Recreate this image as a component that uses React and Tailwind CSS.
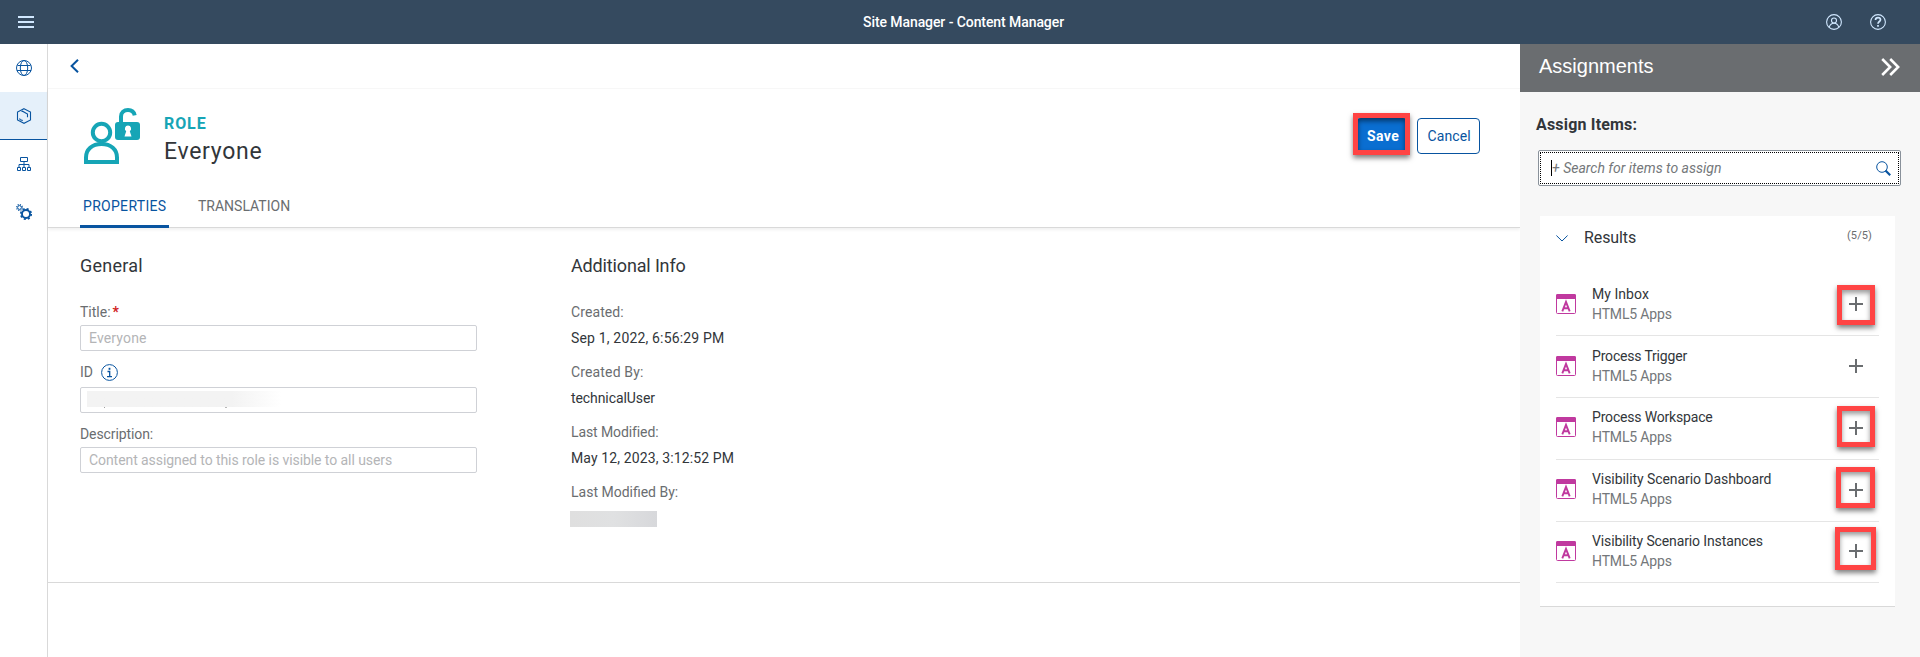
import React from "react";

const assignments = [
  { name: "My Inbox", tracking: "tracking-[0.05px]", height: "h-[62px]", iconTop: "pt-5", textTop: "pt-[10px]", plusTop: "mt-[30px]", mark: "left-[-19px] top-[-19px] h-[40px] w-[38px]" },
  { name: "Process Trigger", tracking: "tracking-[-0.18px]", height: "h-[62px]", iconTop: "pt-5", textTop: "pt-[10px]", plusTop: "mt-[30px]", mark: null },
  { name: "Process Workspace", tracking: "tracking-[-0.18px]", height: "h-[62px]", iconTop: "pt-[19px]", textTop: "pt-[9px]", plusTop: "mt-[30px]", mark: "left-[-19px] top-[-22px] h-[41px] w-[38px]" },
  { name: "Visibility Scenario Dashboard", tracking: "tracking-[-0.07px]", height: "h-[62px]", iconTop: "pt-[19px]", textTop: "pt-[9px]", plusTop: "mt-[30px]", mark: "left-[-20px] top-[-23px] h-[41px] w-[39px]" },
  { name: "Visibility Scenario Instances", tracking: "tracking-[-0.12px]", height: "h-[61px]", iconTop: "pt-[19px]", textTop: "pt-[9px]", plusTop: "mt-[29px]", mark: "left-[-21px] top-[-24px] h-[43px] w-[41px]" },
];

function GlobeIcon() {
  return (
    <svg width="16" height="16" viewBox="0 0 16 16" fill="none" stroke="#0854a0" strokeWidth="1">
      <circle cx="8" cy="8" r="7.5" />
      <ellipse cx="8" cy="8" rx="3.7" ry="7.5" />
      <path d="M1.5 5.5h13M1 10.5h14" />
    </svg>
  );
}

function HexagonIcon() {
  return (
    <svg width="16" height="16" viewBox="0 0 16 16" fill="none" stroke="#0854a0" strokeWidth="1.1">
      <path d="M8 .7l6.500 3.300v8L8 15.300 1.500 12V4z" />
      <path d="M5.500 3.500l1-.3 5 2.800v3.200M3.500 10.500l.8 1.300 2.500.8" />
    </svg>
  );
}

function TreeIcon() {
  return (
    <svg width="14" height="14" viewBox="0 0 14 14" fill="none" stroke="#0854a0" strokeWidth="1">
      <path d="M3.500.5h7v4h-7zM.5 10.500h3v3h-3zM5.500 10.500h3v3h-3zM10.500 10.500h3v3h-3zM7 4.500v6M2 10.500v-3h10v3" />
    </svg>
  );
}

function GearsIcon() {
  return (
    <svg width="16" height="16" viewBox="0 0 16 16" fill="none" stroke="#0854a0">
      <circle cx="10" cy="10" r="4" strokeWidth="1.900" />
      <circle cx="10" cy="10" r="5.200" strokeWidth="1.800" strokeDasharray="2.042 2.042" />
      <circle cx="3.500" cy="3.500" r="1.900" strokeWidth="1" />
      <circle cx="3.500" cy="3.500" r="2.900" strokeWidth="1.200" strokeDasharray="1.139 1.139" />
    </svg>
  );
}

function RoleIcon() {
  return (
    <svg width="56" height="56" viewBox="0 0 56 56" fill="none" stroke="#16a5b6" strokeWidth="4">
      <circle cx="17.500" cy="24.500" r="8.700" />
      <path d="M2 54V49.500C2 41.500 8 36 17.500 36S33 41.500 33 49.500V54z" />
      <path d="M37 15V8.500C37 4.500 40 2 44 2c3.500 0 6 2 6.700 5.300" />
      <rect x="31" y="14" width="25" height="18" rx="3" fill="#16a5b6" stroke="none" />
      <path d="M44 17.500a3.200 3.200 0 0 1 1.800 5.800L47.500 28.500h-7l1.700-5.200A3.200 3.200 0 0 1 44 17.500z" fill="#fff" stroke="none" />
    </svg>
  );
}

function AppIcon() {
  return (
    <svg width="20" height="20" viewBox="0 0 20 20" fill="none" className="shrink-0">
      <rect x=".5" y=".5" width="19" height="19" rx="1" fill="#fff" stroke="#c0399f" />
      <path d="M0 5V1.500Q0 0 1.500 0h17Q20 0 20 1.500V5z" fill="#c0399f" />
      <path d="M6.300 17.400L10 7.900l3.700 9.500M7.500 14.200h5" stroke="#c0399f" strokeWidth="1.900" />
    </svg>
  );
}

function Field({ label, labelTracking, value, valueTracking }) {
  return (
    <div className="flex flex-col gap-1.5">
      <div className={"h-5 text-[#6a6d70] " + labelTracking}>{label}</div>
      <div className={"h-5 " + valueTracking}>{value}</div>
    </div>
  );
}

export default function App() {
  return (
    <div className="flex h-[657px] w-[1920px] flex-col overflow-hidden bg-white font-[Roboto,sans-serif] text-sm leading-5 whitespace-nowrap text-[#32363a]">
      <header className="flex h-11 shrink-0 items-center bg-[#354a5f]">
        <div className="w-[863px] pl-[18px]">
          <svg width="16" height="12" viewBox="0 0 16 12" fill="#d1e8ff"><path d="M0 0h16v2H0zM0 5h16v2H0zM0 10h16v2H0z" /></svg>
        </div>
        <h1 className="flex-1 font-medium tracking-[-0.08px] text-white">Site Manager - Content Manager</h1>
        <div className="flex justify-end gap-7 pr-[34px]">
          <svg width="16" height="16" viewBox="0 0 16 16" fill="none" stroke="#d1e8ff" strokeWidth="1.100">
            <circle cx="8" cy="8" r="7.400" /><circle cx="8" cy="6.500" r="2.500" /><path d="M3.200 13.200C4 10.500 5.500 9.200 8 9.200s4 1.300 4.800 4" />
          </svg>
          <svg width="16" height="16" viewBox="0 0 16 16" fill="none" stroke="#d1e8ff" strokeWidth="1.100">
            <circle cx="8" cy="8" r="7.400" /><path d="M5.500 6c0-1.500 1-2.400 2.500-2.400s2.500.9 2.500 2.200C10.500 7.500 8 7.600 8 9.800M8 11v1.800" strokeWidth="1.700" />
          </svg>
        </div>
      </header>
      <div className="flex min-h-0 flex-1">
        <nav className="flex w-12 shrink-0 flex-col border-r border-[#d9d9d9]">
          <div className="flex h-12 items-center justify-center pl-px"><GlobeIcon /></div>
          <div className="flex h-12 items-center justify-center border-b border-[#0854a0] bg-[#e5f0fa] pl-px"><HexagonIcon /></div>
          <div className="flex h-12 items-center justify-center pl-px"><TreeIcon /></div>
          <div className="flex h-12 items-center justify-center pl-px"><GearsIcon /></div>
        </nav>
        <main className="flex flex-1 flex-col">
          <div className="flex h-11 items-center pl-[22px]">
            <svg width="9" height="14" viewBox="0 0 9 14" fill="none" stroke="#0854a0" strokeWidth="2"><path d="M8 .7L1.600 7 8 13.300" /></svg>
          </div>
          <section className="flex h-[140px] flex-col justify-between border-t border-b border-t-[#f7f7f7] border-b-[#d9d9d9] shadow-[0_2px_3px_rgba(0,0,0,0.06)]">
            <div className="flex pt-[19px] pr-10 pl-9">
              <RoleIcon />
              <div className="ml-6 flex flex-1 flex-col gap-1 pt-1.5">
                <div className="h-5 text-base leading-5 font-bold tracking-[0.9px] text-[#16a5b6]">ROLE</div>
                <div className="h-7 text-[23px] leading-7 tracking-[0.7px]">Everyone</div>
              </div>
              <div className="mt-[10px] flex gap-[10px]">
                <div className="relative h-9 w-[50px] rounded bg-[#0a6ed1] pl-[10px] leading-[36px] font-bold tracking-[0.4px] text-white">
                  Save
                  <div className="absolute top-[-5px] left-[-4px] h-[42px] w-[57px] border-5 border-[#ff4444] shadow-[0_3px_5px_rgba(0,0,0,0.5),inset_0_3px_5px_rgba(0,0,0,0.5)]" />
                </div>
                <div className="h-9 w-[63px] rounded border border-[#0854a0] pl-[9.5px] leading-[34px] tracking-[0.1px] text-[#0854a0]">Cancel</div>
              </div>
            </div>
            <div className="-mb-px flex gap-[29px] pl-8">
              <div className="h-8 w-[89px] rounded-t-xs border-b-3 border-[#0854a0] pl-[3px] tracking-[0.3px] text-[#0854a0]">PROPERTIES</div>
              <div className="h-8 text-[#6a6d70]">TRANSLATION</div>
            </div>
          </section>
          <section className="flex h-[355px] border-b border-[#d9d9d9] pt-[26px] pl-8">
            <div className="w-[491px]">
              <h2 className="mb-6 text-lg leading-6 tracking-[0.25px]">General</h2>
              <div className="flex w-[397px] flex-col text-[#6a6d70]">
                <label className="mb-[3px] h-5">Title:<span className="ml-0.5 font-bold text-[#d02020]">*</span></label>
                <div className="h-[26px] rounded-xs border border-[#cfd1d6] pl-2 leading-6 tracking-[0.15px] text-[#b4b5b7]">Everyone</div>
                <label className="mt-[11px] mb-[5px] flex h-5 gap-2">ID
                  <svg width="17" height="17" viewBox="0 0 17 17" fill="none" stroke="#0854a0" strokeWidth="1" className="mt-[2px]"><circle cx="8.500" cy="8.500" r="7.900" /><path d="M8.500 3.800v2" strokeWidth="1.800" /><path d="M6.500 7.500h2.200v5M6 12.700h5" strokeWidth="1.300" /></svg>
                </label>
                <div className="h-[26px] rounded-xs border border-[#cfd1d6] pt-[3px] pl-1.5">
                  <div className="h-4 w-[194px] bg-linear-to-r from-[#f3f3f3] from-75% to-white" />
                  <div className="ml-[17px] flex gap-[120px]">
                    <div className="h-px w-px bg-[#a0a0a0]" />
                    <div className="h-px w-0.5 bg-[#b8b8b8]" />
                  </div>
                </div>
                <label className="mt-[11px] mb-[3px] h-5 tracking-[-0.1px]">Description:</label>
                <div className="h-[26px] rounded-xs border border-[#cfd1d6] pl-2 leading-6 tracking-[-0.07px] text-[#b4b5b7]">Content assigned to this role is visible to all users</div>
              </div>
            </div>
            <div>
              <h2 className="mb-6 text-lg leading-6 tracking-[-0.15px]">Additional Info</h2>
              <div className="flex flex-col gap-3.5">
                <Field label="Created:" labelTracking="tracking-[0.1px]" value="Sep 1, 2022, 6:56:29 PM" valueTracking="tracking-[0.17px]" />
                <Field label="Created By:" labelTracking="tracking-[0.15px]" value="technicalUser" valueTracking="tracking-[-0.08px]" />
                <Field label="Last Modified:" labelTracking="tracking-[-0.1px]" value="May 12, 2023, 3:12:52 PM" valueTracking="tracking-[0.12px]" />
                <div className="text-[#6a6d70]">Last Modified By:
                  <div className="mt-[9px] -ml-px h-4 w-[87px] bg-linear-to-r from-[#dfdfdf] via-[#e0e1e2] to-[#d7d8db]" />
                </div>
              </div>
            </div>
          </section>
        </main>
        <aside className="flex w-[400px] shrink-0 flex-col bg-[#f7f7f7]">
          <div className="flex h-12 items-center bg-[#6a6d70] pr-5 pl-[19px] text-white">
            <h2 className="flex-1 pb-1 font-['Liberation_Sans',sans-serif] text-xl leading-6">Assignments</h2>
            <svg width="19" height="18" viewBox="0 0 19 18" fill="none" stroke="#fff" strokeWidth="2.500" className="-mt-0.5"><path d="M1.200 1l8 8-8 8M9.200 1l8 8-8 8" /></svg>
          </div>
          <h3 className="mt-[23px] ml-4 h-5 text-base leading-5 font-bold tracking-[0.18px]">Assign Items:</h3>
          <div className="mt-[15px] ml-[18px] h-9 w-[363px] rounded-xs border border-[#89919a] bg-white p-px">
            <div className="flex h-full items-center border border-dotted border-black pr-[7px] pl-[10px]">
              <div className="h-4 w-px bg-black" />
              <div className="flex-1 text-[#74777a] italic">+ Search for items to assign</div>
              <svg width="15" height="15" viewBox="0 0 15 15" fill="none" stroke="#0854a0"><circle cx="6" cy="6" r="5.300" /><path d="M9.500 9.500l4.700 4.700" strokeWidth="2.200" /></svg>
            </div>
          </div>
          <div className="mt-[30px] ml-5 flex h-[391px] w-[355px] flex-col border-b border-[#d9d9d9] bg-white px-4">
            <div className="flex h-[58px] pt-3">
              <svg width="12" height="7" viewBox="0 0 12 7" fill="none" stroke="#0854a0" className="mt-[7px]"><path d="M.4.5L6 6 11.600.5" /></svg>
              <h3 className="ml-4 flex-1 text-base leading-5 tracking-[-0.1px]">Results</h3>
              <span className="mr-[7px] h-4 text-[11px] leading-4 tracking-[0.1px] text-[#6a6d70]">(5/5)</span>
            </div>
            {assignments.map((a) => (
              <div key={a.name} className={"flex w-[323px] items-start border-b border-[#e5e5e5] " + a.height}>
                <div className={a.iconTop}><AppIcon /></div>
                <div className={"ml-4 flex-1 " + a.textTop}>
                  <div className={"h-5 " + a.tracking}>{a.name}</div>
                  <div className="h-5 tracking-[-0.15px] text-[#74777a]">HTML5 Apps</div>
                </div>
                <div className={"relative mr-[23px] h-0 w-0 " + a.plusTop}>
                  <svg width="14" height="14" viewBox="0 0 14 14" stroke="#6a6d70" strokeWidth="2" className="absolute -top-[7px] -left-[7px]"><path d="M7 0v14M0 7h14" /></svg>
                  {a.mark && <div className={"absolute border-5 border-[#ff4444] shadow-[0_3px_5px_rgba(0,0,0,0.5),inset_0_3px_5px_rgba(0,0,0,0.4)] " + a.mark} />}
                </div>
              </div>
            ))}
          </div>
        </aside>
      </div>
    </div>
  );
}
